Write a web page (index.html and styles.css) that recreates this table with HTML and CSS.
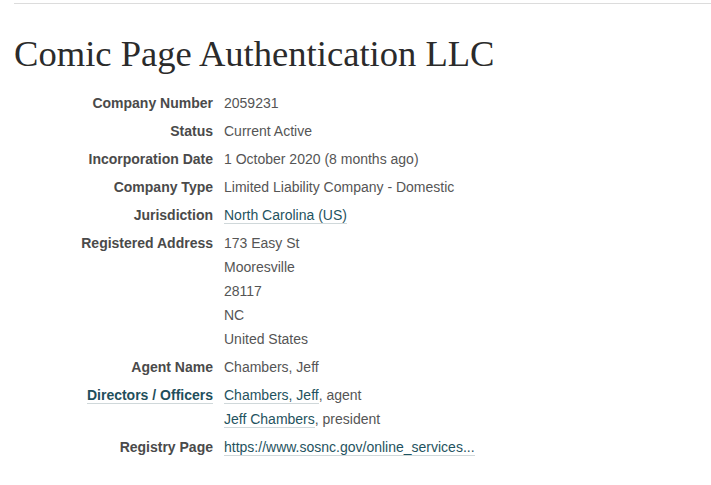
FILE: index.html
```html
<!DOCTYPE html>
<html>
<head>
<meta charset="utf-8">
<link rel="stylesheet" href="styles.css">
</head>
<body>
<div class="page">
  <div class="rule"></div>
  <h1 class="title">Comic Page Authentication LLC</h1>
  <dl class="attrs">
    <dt>Company Number</dt>
    <dd>2059231</dd>
    <dt>Status</dt>
    <dd>Current Active</dd>
    <dt>Incorporation Date</dt>
    <dd>1 October 2020 (8 months ago)</dd>
    <dt>Company Type</dt>
    <dd>Limited Liability Company - Domestic</dd>
    <dt>Jurisdiction</dt>
    <dd><a class="link" href="#">North Carolina (US)</a></dd>
    <dt>Registered Address</dt>
    <dd><div>173 Easy St</div><div>Mooresville</div><div>28117</div><div>NC</div><div>United States</div></dd>
    <dt>Agent Name</dt>
    <dd>Chambers, Jeff</dd>
    <dt><a class="link label-link" href="#">Directors / Officers</a></dt>
    <dd><div><a class="link" href="#">Chambers, Jeff</a>, agent</div><div><a class="link" href="#">Jeff Chambers</a>, president</div></dd>
    <dt>Registry Page</dt>
    <dd><a class="link" href="#">https://www.sosnc.gov/online_services...</a></dd>
  </dl>
</div>
</body>
</html>
```
FILE: styles.css
```css
html, body {
  margin: 0;
  padding: 0;
  background: #fff;
}
.page {
  padding-left: 14px;
  padding-top: 3px;
}
.rule {
  height: 1px;
  background: #dcdcdc;
}
.title {
  font-family: "Liberation Serif", "Times New Roman", serif;
  font-weight: normal;
  font-size: 36.6px;
  line-height: 44px;
  color: #2b2b2b;
  margin: 28px 0 15px 0;
}
.attrs {
  display: grid;
  grid-template-columns: 199px 1fr;
  column-gap: 11px;
  row-gap: 4px;
  margin: 0;
  font-family: "Liberation Sans", Arial, sans-serif;
  font-size: 14px;
  line-height: 24px;
}
.attrs dt {
  text-align: right;
  font-weight: bold;
  color: #4a4a4a;
}
.attrs dd {
  margin: 0;
  color: #555;
}
.link {
  color: #1f5360;
  text-decoration: none;
  border-bottom: 1px solid #d0d8da;
}
.label-link {
  color: #1f4f5c;
}
```
